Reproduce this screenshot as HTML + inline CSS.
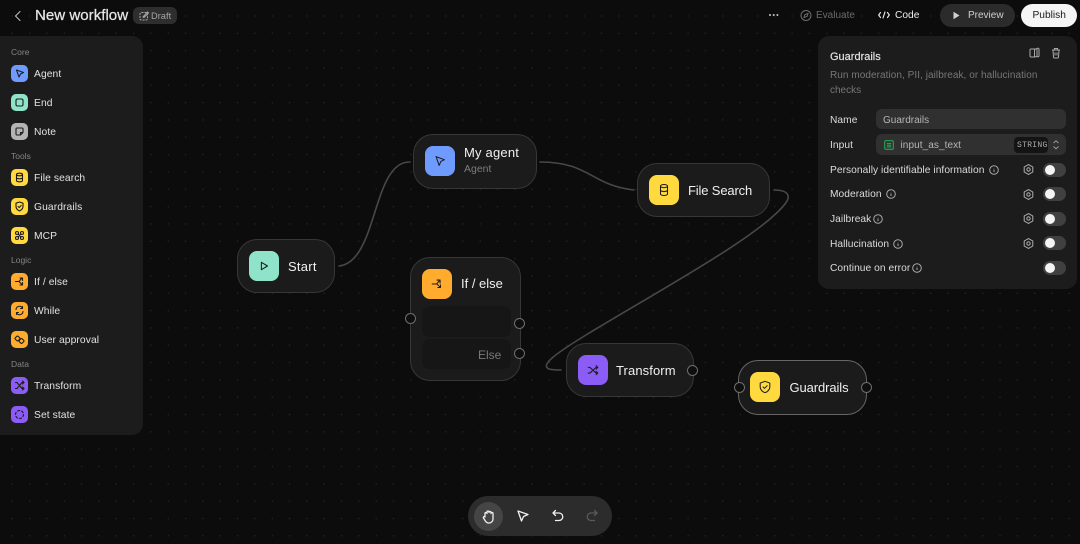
<!DOCTYPE html>
<html><head><meta charset="utf-8"><style>
*{box-sizing:border-box}
html,body{margin:0;padding:0;background:#0c0c0c}
body{width:1080px;height:544px;position:relative;overflow:hidden;font-family:"Liberation Sans",sans-serif;color:#e8e8e8}
.abs,.t{position:absolute}
.t{white-space:nowrap;line-height:14px}
#dots{position:absolute;left:0;top:0;width:1080px;height:544px;background-image:radial-gradient(circle at center,#282828 0,#282828 .5px,transparent .8px);background-size:17.33px 17.33px;background-position:3.66px 7.33px}
.panel{position:absolute;background:#1c1c1c}
.sl{position:absolute;left:11px;font-size:8.5px;color:#858585;line-height:12px}
.ic{position:absolute;left:11px;width:17px;height:17px;border-radius:5px}
.ic svg{position:absolute;left:0;top:0;width:17px;height:17px;fill:none;stroke:#1c1c1c;stroke-width:1.1;stroke-linecap:round;stroke-linejoin:round}
.il{position:absolute;left:34px;font-size:10.3px;color:#e2e2e2;line-height:14px;letter-spacing:.08px}
.node{position:absolute;background:#1b1b1b;border:1.2px solid #373737;border-radius:20px}
.ni{position:absolute;width:30px;height:30px;border-radius:8px}
.ni svg{position:absolute;left:8px;top:8px;width:14px;height:14px;fill:none;stroke:#1c1c1c;stroke-width:1.2;stroke-linecap:round;stroke-linejoin:round}
.nl{position:absolute;font-size:13px;color:#f0f0f0;line-height:16px;white-space:nowrap;letter-spacing:.1px}
.port{position:absolute;width:11px;height:11px;border-radius:50%;background:#0e0e0e;border:1.3px solid #6e6e6e}
.pl{position:absolute;left:830px;font-size:10.2px;color:#dcdcdc;line-height:14px;white-space:nowrap;letter-spacing:.06px}
.tg{position:absolute;left:1043px;width:23px;height:14px;border-radius:7px;background:#404040}
.tg:after{content:"";position:absolute;left:2px;top:2px;width:10px;height:10px;border-radius:50%;background:#f4f4f4}
.ii{position:absolute;width:10px;height:10px;fill:none;stroke:#a8a8a8;stroke-width:1;overflow:visible}
.gear{position:absolute;left:1023px;width:11px;height:11px;fill:none;stroke:#b0b0b0;stroke-width:1;overflow:visible}
.tb{position:absolute;fill:none;stroke:#f0f0f0;stroke-width:1.3;stroke-linecap:round;stroke-linejoin:round}
</style></head><body>
<div id="dots"></div>

<svg class="abs" style="left:0;top:0" width="1080" height="544" fill="none" stroke="#484848" stroke-width="1.6" stroke-linecap="round">
<path d="M339 266C378 262 372 161 410 162"/>
<path d="M540 162C590 162 590 185 634 190"/>
<path d="M774 190C787 190 792 195 785 204C760 236 660 290 586 335C555 354 540 365 549 369C552 370 556 370 561 370"/>
</svg>

<!-- top bar -->
<svg class="abs" style="left:11.500px;top:9px" width="12" height="14" fill="none" stroke="#bdbdbd" stroke-width="1.1" stroke-linecap="round" stroke-linejoin="round"><path d="M8 2.500L3.500 7 8 11.500"/></svg>
<div class="t" style="left:35px;top:7px;font-size:15.1px;line-height:18px;font-weight:400;color:#e6e6e6;-webkit-text-stroke:.25px #e6e6e6">New workflow</div>
<div class="abs" style="left:133px;top:7px;width:44px;height:17px;border-radius:6px;background:#2e2e2e"></div>
<svg class="abs" style="left:138px;top:10px" width="12" height="12" fill="none" stroke="#a5a5a5" stroke-width="1"><rect x="2" y="2.500" width="7.500" height="7.500" rx="1.500" stroke-dasharray="2 1"/><path d="M5 7l4.500-5 1 1L6 7.500z"/></svg>
<div class="t" style="left:151px;top:8.500px;font-size:9.300px;color:#a5a5a5">Draft</div>

<svg class="abs" style="left:768px;top:12px" width="12" height="6" fill="#c8c8c8"><circle cx="2" cy="3" r="1"/><circle cx="5.700" cy="3" r="1"/><circle cx="9.400" cy="3" r="1"/></svg>
<svg class="abs" style="left:800px;top:9px" width="12" height="13" fill="none" stroke="#6e6e6e" stroke-width="1"><circle cx="6" cy="6.500" r="5"/><path d="M8 4.500L7 7.500 4 8.500 5 5.500z"/></svg>
<div class="t" style="left:816px;top:9px;font-size:10px;color:#6a6a6a">Evaluate</div>
<svg class="abs" style="left:878px;top:10px" width="12" height="10" fill="none" stroke="#f0f0f0" stroke-width="1.100" stroke-linecap="round" stroke-linejoin="round"><path d="M2.500 2.500L.7 5l1.800 2.500M9.500 2.500L11.300 5 9.500 7.500M7 2L5 8"/></svg>
<div class="t" style="left:895px;top:9px;font-size:10.200px;color:#ececec">Code</div>
<div class="abs" style="left:940px;top:4px;width:75px;height:23px;border-radius:12px;background:#2b2b2b"></div>
<svg class="abs" style="left:952px;top:11px" width="9" height="9" fill="#d0d0d0"><path d="M1.500 .8L7.500 4.500 1.500 8.200z"/></svg>
<div class="t" style="left:968px;top:9px;font-size:10px;color:#cfcfcf">Preview</div>
<div class="abs" style="left:1021px;top:4px;width:56px;height:23px;border-radius:12px;background:#f5f5f5"></div>
<div class="t" style="left:1032.500px;top:9px;font-size:10.200px;color:#1a1a1a">Publish</div>

<!-- left panel -->
<div class="panel" style="left:-10px;top:36px;width:153px;height:399px;border-radius:11px"></div>
<div class="sl" style="top:46px">Core</div>
<div class="sl" style="top:150px">Tools</div>
<div class="sl" style="top:254px">Logic</div>
<div class="sl" style="top:358px">Data</div>

<div class="ic" style="top:65px;background:#6f9bff"><svg viewBox="0 0 17 17"><path d="M5.500 5l7 2.500-3 1.500-1.500 3z"/></svg></div><div class="il" style="top:68px">Agent</div>
<div class="ic" style="top:94px;background:#8fe3c8"><svg viewBox="0 0 17 17"><rect x="5" y="5" width="7" height="7" rx="1.500"/></svg></div><div class="il" style="top:97px">End</div>
<div class="ic" style="top:123px;background:#b4b4b4"><svg viewBox="0 0 17 17"><path d="M5 6a1 1 0 0 1 1-1h5a1 1 0 0 1 1 1v3.500L9.500 12H6a1 1 0 0 1-1-1zM9.500 12V9.500H12"/></svg></div><div class="il" style="top:126px">Note</div>

<div class="ic" style="top:169px;background:#ffd93d"><svg viewBox="0 0 17 17"><ellipse cx="8.500" cy="5.500" rx="3" ry="1.300"/><path d="M5.500 5.500v6c0 .7 1.300 1.300 3 1.300s3-.6 3-1.300v-6M5.500 8.500c0 .7 1.300 1.300 3 1.300s3-.6 3-1.300"/></svg></div><div class="il" style="top:172px">File search</div>
<div class="ic" style="top:198px;background:#ffd93d"><svg viewBox="0 0 17 17"><path d="M8.500 4l3.500 1.200v3.300c0 2-1.500 3.500-3.500 4.500-2-1-3.500-2.500-3.500-4.500V5.200z"/><path d="M7 8.500l1.200 1 2-2"/></svg></div><div class="il" style="top:201px">Guardrails</div>
<div class="ic" style="top:227px;background:#ffd93d"><svg viewBox="0 0 17 17"><circle cx="6" cy="6" r="1.500"/><circle cx="11" cy="6" r="1.500"/><circle cx="6" cy="11" r="1.500"/><circle cx="11" cy="11" r="1.500"/><path d="M7 7l3 3M10 7l-3 3"/></svg></div><div class="il" style="top:230px">MCP</div>

<div class="ic" style="top:273px;background:#ffab2e"><svg viewBox="0 0 17 17"><path d="M4.500 8.500h3.500l2.500-3M9 5h2.500v2.500M8.500 9l2.500 2.500M11.500 9.500V12H9"/></svg></div><div class="il" style="top:276px">If / else</div>
<div class="ic" style="top:302px;background:#ffab2e"><svg viewBox="0 0 17 17"><path d="M5 7.500a3.500 3.500 0 0 1 6.500-1.500M12 9.500A3.500 3.500 0 0 1 5.500 11M11.500 4.500V6.500H9.500M5.500 12.500V10.500H7.500"/></svg></div><div class="il" style="top:305px">While</div>
<div class="ic" style="top:331px;background:#ffab2e"><svg viewBox="0 0 17 17"><rect x="4.500" y="5.500" width="4" height="4" rx="1" transform="rotate(45 6.500 7.500)"/><rect x="8.500" y="8" width="4" height="4" rx="1" transform="rotate(45 10.500 10)"/></svg></div><div class="il" style="top:334px">User approval</div>

<div class="ic" style="top:377px;background:#8b5cf6"><svg viewBox="0 0 17 17"><path d="M4.500 5.500h1.500l5 6h1.500M4.500 11.500h1.500l5-6h1.500M11.500 4l1.500 1.500-1.500 1.500M11.500 10l1.500 1.500-1.500 1.500"/></svg></div><div class="il" style="top:380px">Transform</div>
<div class="ic" style="top:406px;background:#8b5cf6"><svg viewBox="0 0 17 17"><circle cx="8.500" cy="8.500" r="4" stroke-dasharray="2.100 2.100"/></svg></div><div class="il" style="top:409px">Set state</div>

<!-- nodes -->
<div class="node" style="left:237px;top:239px;width:98px;height:54px"></div>
<div class="ni" style="left:249px;top:251px;background:#8fe3c8"><svg viewBox="0 0 16 16"><path d="M5 3.800l7 4.200-7 4.200z"/></svg></div>
<div class="nl" style="left:288px;top:258.500px;letter-spacing:.25px">Start</div>

<div class="node" style="left:413px;top:134px;width:124px;height:55px"></div>
<div class="ni" style="left:425px;top:146px;background:#6f9bff"><svg viewBox="0 0 16 16"><path d="M3.500 3L13 6.500 9 8.500 7 13z"/></svg></div>
<div class="nl" style="left:464px;top:145px;letter-spacing:.2px">My agent</div>
<div class="t" style="left:464px;top:162px;font-size:10.500px;color:#7c7c7c">Agent</div>

<div class="node" style="left:637px;top:163px;width:133px;height:54px"></div>
<div class="ni" style="left:649px;top:175px;background:#ffd93d"><svg viewBox="0 0 16 16"><ellipse cx="8" cy="3.500" rx="4" ry="1.800"/><path d="M4 3.500v9c0 1 1.800 1.800 4 1.800s4-.8 4-1.800v-9M4 8c0 1 1.800 1.800 4 1.800S12 9 12 8"/></svg></div>
<div class="nl" style="left:688px;top:182.500px;letter-spacing:-.15px">File Search</div>

<div class="node" style="left:410px;top:257px;width:111px;height:124px"></div>
<div class="ni" style="left:422px;top:269px;background:#ffab2e"><svg viewBox="0 0 16 16"><path d="M2.500 8h5l3-3.500M8 3.500h3.500V7M8.500 8.500l3 3M12 9v3H9"/></svg></div>
<div class="nl" style="left:461px;top:276px;letter-spacing:0">If / else</div>
<div class="abs" style="left:422px;top:306px;width:89px;height:31px;border-radius:8px;background:#161616"></div>
<div class="abs" style="left:422px;top:339px;width:89px;height:30px;border-radius:8px;background:#161616"></div>
<div class="t" style="left:478px;top:348px;font-size:12px;color:#787878">Else</div>
<div class="port" style="left:405px;top:313px"></div>
<div class="port" style="left:514px;top:318px"></div>
<div class="port" style="left:514px;top:348px"></div>

<div class="node" style="left:566px;top:343px;width:128px;height:54px"></div>
<div class="ni" style="left:578px;top:355px;background:#8b5cf6"><svg viewBox="0 0 16 16"><path d="M2.500 5h2l7 6.500h2M2.500 11.500h2l7-6.500h2M11.500 3l2 2-2 2M11.500 9.500l2 2-2 2"/></svg></div>
<div class="nl" style="left:616px;top:362.500px">Transform</div>
<div class="port" style="left:687px;top:365px"></div>

<div class="node" style="left:738px;top:360px;width:129px;height:55px;border-color:#666"></div>
<div class="ni" style="left:750px;top:372px;background:#ffd93d"><svg viewBox="0 0 16 16"><path d="M8 1.500l5.500 2v4.500c0 3-2.500 5.500-5.500 6.500-3-1-5.500-3.500-5.500-6.500V3.500z"/><path d="M5.800 8l1.700 1.500L10.500 6.500"/></svg></div>
<div class="nl" style="left:789.500px;top:380px;letter-spacing:-.1px">Guardrails</div>
<div class="port" style="left:734px;top:382px"></div>
<div class="port" style="left:861px;top:382px"></div>

<!-- right panel -->
<div class="panel" style="left:818px;top:36px;width:259px;height:253px;border-radius:11px"></div>
<div class="t" style="left:830px;top:50px;font-size:11px;color:#e8e8e8;-webkit-text-stroke:.15px #e8e8e8">Guardrails</div>
<svg class="abs" style="left:1029px;top:47px" width="12" height="12" fill="none" stroke="#aaa" stroke-width="1"><path d="M5.500 2H2a1 1 0 0 0-1 1v6a1 1 0 0 0 1 1h3.500zM5.500 2.500l3-1.200a1 1 0 0 1 1.500 1v6.500a1 1 0 0 1-1 1H5.500M8 2v8"/></svg>
<svg class="abs" style="left:1050px;top:47px" width="12" height="12" fill="none" stroke="#aaa" stroke-width="1"><path d="M2 3h8M4.500 3V1.500h3V3M3 3l.5 7a1 1 0 0 0 1 1h3a1 1 0 0 0 1-1L9 3M5 5.500v3M7 5.500v3"/></svg>
<div class="t" style="left:830px;top:69px;font-size:10px;color:#777;letter-spacing:.06px">Run moderation, PII, jailbreak, or hallucination</div>
<div class="t" style="left:830px;top:83.500px;font-size:10px;color:#777">checks</div>

<div class="pl" style="top:114px">Name</div>
<div class="abs" style="left:876px;top:109px;width:190px;height:20px;border-radius:6px;background:#303030"></div>
<div class="t" style="left:883px;top:114px;font-size:10px;color:#b5b5b5">Guardrails</div>
<div class="pl" style="top:139px">Input</div>
<div class="abs" style="left:876px;top:134px;width:190px;height:21px;border-radius:6px;background:#303030"></div>
<svg class="abs" style="left:884px;top:139.500px" width="10" height="10" fill="none" stroke="#1fa84f" stroke-width="1.100"><rect x=".7" y=".7" width="8.600" height="8.600" rx="1.200"/><path d="M2.800 3.500h4.400M2.800 5.200h4.400M2.800 6.900h4.400"/></svg>
<div class="t" style="left:900.500px;top:139px;font-size:10px;color:#b5b5b5;letter-spacing:.08px">input_as_text</div>
<div class="abs" style="left:1014px;top:137px;width:34px;height:16px;border-radius:4px;background:#141414"></div>
<div class="t" style="left:1017px;top:139px;font-family:'Liberation Mono',monospace;font-size:8px;color:#aaa;letter-spacing:.3px">STRING</div>
<svg class="abs" style="left:1052px;top:139px" width="8" height="12" fill="none" stroke="#9a9a9a" stroke-width="1"><path d="M1.500 4L4 1.800 6.500 4M1.500 7.500L4 9.700 6.500 7.500"/></svg>

<div class="pl" style="top:164px">Personally identifiable information</div>
<svg class="ii" style="left:989px;top:165px" viewBox="0 0 10 10"><circle cx="5" cy="5" r="4.300"/><path d="M5 4.500v2.500M5 3v.3"/></svg>
<div class="pl" style="top:188px">Moderation</div>
<svg class="ii" style="left:886px;top:189px" viewBox="0 0 10 10"><circle cx="5" cy="5" r="4.300"/><path d="M5 4.500v2.500M5 3v.3"/></svg>
<div class="pl" style="top:213px">Jailbreak</div>
<svg class="ii" style="left:873px;top:214px" viewBox="0 0 10 10"><circle cx="5" cy="5" r="4.300"/><path d="M5 4.500v2.500M5 3v.3"/></svg>
<div class="pl" style="top:237.500px">Hallucination</div>
<svg class="ii" style="left:893px;top:238.500px" viewBox="0 0 10 10"><circle cx="5" cy="5" r="4.300"/><path d="M5 4.500v2.500M5 3v.3"/></svg>
<div class="pl" style="top:262px">Continue on error</div>
<svg class="ii" style="left:912px;top:263px" viewBox="0 0 10 10"><circle cx="5" cy="5" r="4.300"/><path d="M5 4.500v2.500M5 3v.3"/></svg>

<svg class="gear" style="top:164px" viewBox="0 0 11 11"><path d="M5.500 .6l4.300 2.400v5L5.500 10.400 1.200 8V3z"/><circle cx="5.500" cy="5.500" r="1.700"/></svg>
<svg class="gear" style="top:188.500px" viewBox="0 0 11 11"><path d="M5.500 .6l4.300 2.400v5L5.500 10.400 1.200 8V3z"/><circle cx="5.500" cy="5.500" r="1.700"/></svg>
<svg class="gear" style="top:213px" viewBox="0 0 11 11"><path d="M5.500 .6l4.300 2.400v5L5.500 10.400 1.200 8V3z"/><circle cx="5.500" cy="5.500" r="1.700"/></svg>
<svg class="gear" style="top:237.500px" viewBox="0 0 11 11"><path d="M5.500 .6l4.300 2.400v5L5.500 10.400 1.200 8V3z"/><circle cx="5.500" cy="5.500" r="1.700"/></svg>

<div class="tg" style="top:163px"></div>
<div class="tg" style="top:187px"></div>
<div class="tg" style="top:212px"></div>
<div class="tg" style="top:236px"></div>
<div class="tg" style="top:261px"></div>

<!-- bottom toolbar -->
<div class="abs" style="left:468px;top:496px;width:144px;height:40px;border-radius:20px;background:#2c2c2c"></div>
<div class="abs" style="left:474px;top:502px;width:29px;height:29px;border-radius:50%;background:#454545"></div>
<svg class="tb" style="left:482px;top:509px" width="14" height="15" viewBox="0 0 14 15"><path d="M3 8V4.500a1 1 0 0 1 2 0V3a1 1 0 0 1 2 0v.5a1 1 0 0 1 2 0v1a1 1 0 0 1 2 0V10a4 4 0 0 1-4 4H6.500C5 14 4 13 3 11.500L1.500 9C1 8 2.300 7 3 8z"/></svg>
<svg class="tb" style="left:516px;top:509px" width="14" height="14" viewBox="0 0 14 14"><path d="M2 2l10 3.500-4.500 2L5.500 12z"/></svg>
<svg class="tb" style="left:551px;top:509px" width="14" height="14" viewBox="0 0 14 14"><path d="M4.500 1.500L2 4l2.500 2.500M2 4h6a3.500 3.500 0 0 1 0 7.500H4.500"/></svg>
<svg class="tb" style="left:585px;top:509px;stroke:#5a5a5a" width="14" height="14" viewBox="0 0 14 14"><path d="M9.500 1.500L12 4 9.500 6.500M12 4H6a3.500 3.500 0 0 0 0 7.500h3.500"/></svg>
</body></html>
